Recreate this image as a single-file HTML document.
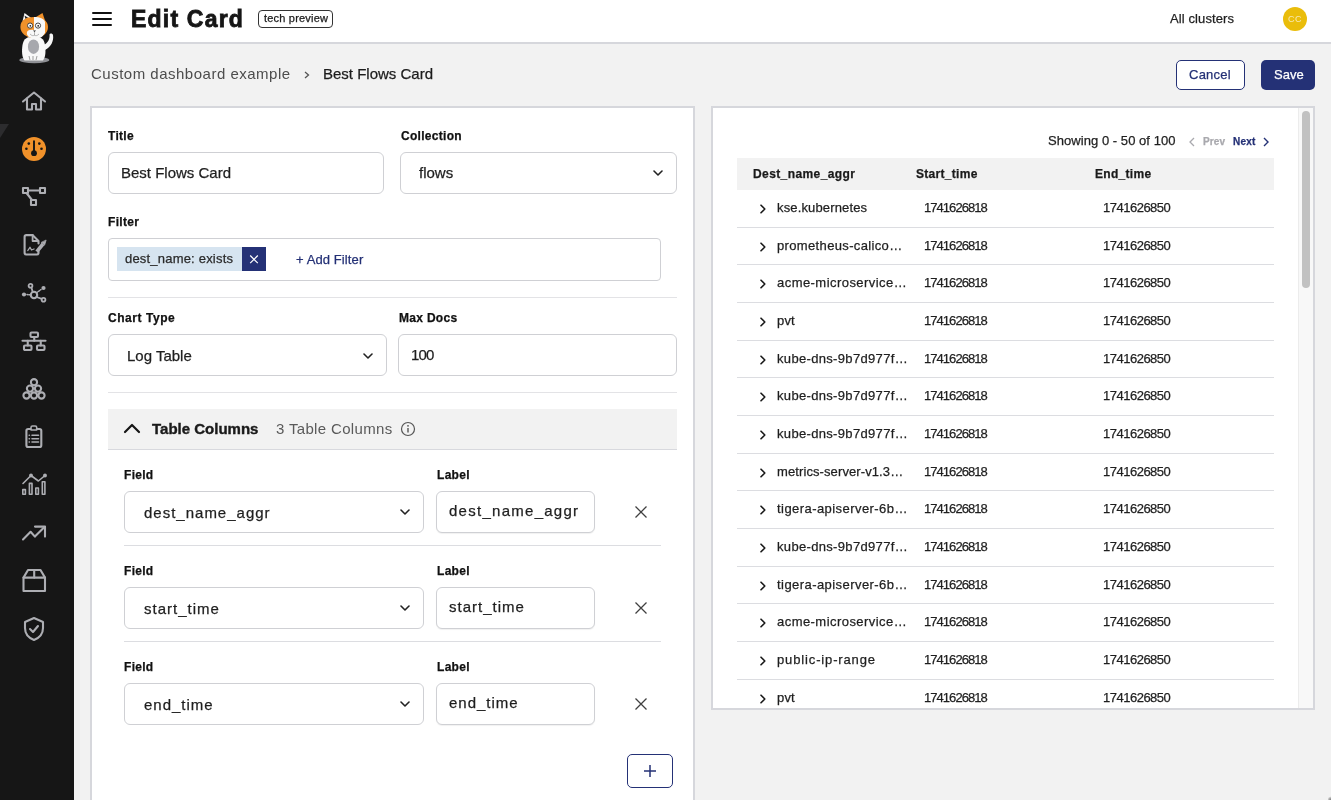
<!DOCTYPE html>
<html><head><meta charset="utf-8"><title>Edit Card</title>
<style>
html,body{margin:0;padding:0;}
body{width:1331px;height:800px;overflow:hidden;background:#f2f2f2;position:relative;font-family:"Liberation Sans", sans-serif;}
.t{position:absolute;white-space:nowrap;will-change:transform;-webkit-text-stroke:0.25px currentColor;}
.b{position:absolute;}
</style></head><body>
<div class="b" style="left:0px;top:0px;width:74px;height:800px;background:#161616;"></div>
<svg class="b" style="left:0;top:120px" width="12" height="20" viewBox="0 0 12 20"><path d="M0 4 L9 4 L0 18 Z" fill="#2c2c2e"/></svg>
<svg class="b" style="left:0;top:0" width="74" height="72" viewBox="0 0 74 72">
<ellipse cx="34.3" cy="60" rx="15" ry="3.3" fill="#8f9095"/>
<path d="M43.5 45 C48 43 50 39 49.5 34.5 C50 33 52.5 33 53 35 C54 41 51 47 45 50 Z" fill="#f6f6f6"/>
<path d="M22.5 45 C21.5 52 22 57 24.5 60.5 L43 60.5 C45.5 57 46 52 45 45 C44 38 40 36.5 34 36.5 C28 36.5 23.5 38 22.5 45Z" fill="#f8f8f8"/>
<ellipse cx="33.5" cy="46.7" rx="5.6" ry="7.2" fill="#a7a8ad"/>
<path d="M29 56 L30 60 M33 56 L33 60 M37 56 L36 60" stroke="#777" stroke-width="0.7"/>
<path d="M22.6 21 L24.5 13 L31.3 18 Z" fill="#f6f6f6"/>
<path d="M24.5 15.5 L25.5 19 L28.5 18 Z" fill="#222"/>
<path d="M36 17 L42.5 13 L45.5 22 Z" fill="#f0912a"/>
<path d="M20.4 27 C20.4 20 26 17 34 17 C42 17 48 20.5 48 27 C48 33 43 38 34 38 C26 38 20.4 33 20.4 27Z" fill="#f0912a"/>
<path d="M34 17 C40 17 44 18.5 45 22 L45 33 C43 36 40 37 34 37 Z" fill="#f8f8f8"/>
<path d="M26.8 33 C27 29.5 31 29.5 34 30 C38 29 43 30 44 33 C43.5 37 40 38.5 35 38.5 C31 38.5 27 37 26.8 33Z" fill="#f8f8f8"/>
<circle cx="30.1" cy="25.6" r="2.6" fill="#fff" stroke="#333" stroke-width="0.9"/>
<circle cx="38" cy="25.6" r="2.6" fill="#fff" stroke="#333" stroke-width="0.9"/>
<circle cx="30.3" cy="25.8" r="0.9" fill="#222"/><circle cx="38.2" cy="25.8" r="0.9" fill="#222"/>
<path d="M33 30.5 L36 30.5 L34.5 32Z" fill="#222"/>
<path d="M34.5 32 L34.5 35.5 M30 34 C32 36 33.5 36 34.5 35 C35.5 36 37 36 39 34" fill="none" stroke="#888" stroke-width="0.6"/>
</svg>
<svg class="b" style="left:20.0px;top:87.0px" width="28" height="28" viewBox="0 0 28 28" fill="none" stroke="#adaeb3" stroke-width="2.1" stroke-linejoin="round" stroke-linecap="round"><path d="M3 14.5 L14 5.5 L25 14.5"/><path d="M7 11.5 L7 22.5 L12 22.5 L12 17 L16 17 L16 22.5 L21 22.5 L21 11.5"/></svg>
<svg class="b" style="left:22px;top:137px" width="24" height="24" viewBox="0 0 24 24"><circle cx="12" cy="12" r="12" fill="#f0912a"/><path d="M12 3.6 L12 14" stroke="#161616" stroke-width="1.9"/><circle cx="12" cy="16.2" r="2.9" fill="#161616"/><circle cx="6.8" cy="6.6" r="1.3" fill="#161616"/><circle cx="17.3" cy="6.6" r="1.3" fill="#161616"/><circle cx="4.4" cy="11.8" r="1.3" fill="#161616"/><circle cx="19.5" cy="11.8" r="1.3" fill="#161616"/></svg>
<svg class="b" style="left:20.0px;top:183.0px" width="28" height="28" viewBox="0 0 28 28" fill="none" stroke="#adaeb3" stroke-width="2.1" stroke-linejoin="round" stroke-linecap="round"><rect x="3" y="5" width="5" height="5"/><rect x="20" y="5" width="5" height="5"/><rect x="11" y="17" width="5" height="5"/><path d="M8 7.5 L20 7.5"/><path d="M6.5 10 L12 17"/></svg>
<svg class="b" style="left:20.0px;top:231.0px" width="28" height="28" viewBox="0 0 28 28" fill="none" stroke="#adaeb3" stroke-width="2.1" stroke-linejoin="round" stroke-linecap="round"><path d="M12.5 4.1 L6.3 4.1 Q4.6 4.1 4.6 5.8 L4.6 21.8 Q4.6 23.5 6.3 23.5 L16.8 23.5 Q18.5 23.5 18.5 21.8 L18.5 20.5"/><path d="M12.5 4.1 L18.5 10 L18.5 12.5"/><path d="M12.6 4.5 L12.6 10 L18.2 10" stroke-width="1.8"/><path d="M7.8 19.5 L10 16.3 L11.5 19 L14 18" stroke-width="1.3"/><path d="M16.8 20.6 L23 13" stroke-width="3.6" stroke-linecap="butt"/><path d="M21.6 11.6 L24.6 14.1 L26 9.4 Z" fill="#adaeb3" stroke-width="0.8"/></svg>
<svg class="b" style="left:20.0px;top:279.0px" width="28" height="28" viewBox="0 0 28 28" fill="none" stroke="#adaeb3" stroke-width="2.1" stroke-linejoin="round" stroke-linecap="round"><circle cx="14" cy="16" r="3.2"/><circle cx="10.5" cy="6.8" r="1.9" stroke-width="1.8"/><circle cx="23.5" cy="20.8" r="1.9" stroke-width="1.8"/><path d="M11.5 8.8 L12.7 13" stroke-width="1.8"/><path d="M16.5 18 L21.8 19.8" stroke-width="1.8"/><path d="M10.6 15.8 L7 15.6" stroke-width="1.5" stroke-dasharray="1.3 1.2"/><path d="M16.6 13.8 L21 10.5" stroke-width="1.5" stroke-dasharray="1.3 1.2"/><circle cx="4" cy="15.5" r="2.1" fill="#adaeb3" stroke="none"/><circle cx="23.5" cy="9" r="2.1" fill="#adaeb3" stroke="none"/></svg>
<svg class="b" style="left:20.0px;top:327.0px" width="28" height="28" viewBox="0 0 28 28" fill="none" stroke="#adaeb3" stroke-width="2.1" stroke-linejoin="round" stroke-linecap="round"><rect x="10.5" y="5.5" width="7.5" height="4.5" rx="1"/><path d="M14.25 10 L14.25 13.8"/><path d="M2.5 13.8 L25.5 13.8"/><path d="M7.75 13.8 L7.75 18.5"/><path d="M20.75 13.8 L20.75 18.5"/><rect x="4" y="18.5" width="7.5" height="4.5" rx="1"/><rect x="17" y="18.5" width="7.5" height="4.5" rx="1"/></svg>
<svg class="b" style="left:20.0px;top:377.0px" width="28" height="24" viewBox="0 0 28 24" fill="none" stroke="#adaeb3" stroke-width="2.1" stroke-linejoin="round" stroke-linecap="round"><circle cx="14" cy="5.2" r="3.1"/><circle cx="10" cy="11.6" r="3.1"/><circle cx="18" cy="11.6" r="3.1"/><circle cx="6.5" cy="18.5" r="3.1"/><circle cx="14" cy="18.5" r="3.1"/><circle cx="21.5" cy="18.5" r="3.1"/></svg>
<svg class="b" style="left:20.0px;top:423.0px" width="28" height="28" viewBox="0 0 28 28" fill="none" stroke="#adaeb3" stroke-width="2.1" stroke-linejoin="round" stroke-linecap="round"><rect x="6.4" y="6" width="14.9" height="18" rx="1.8"/><path d="M11 7 L11 4.5 Q11 3 12.5 3 L15.2 3 Q16.7 3 16.7 4.5 L16.7 7 Z" stroke-width="1.6" fill="#161616"/><path d="M9.2 12.3 L9.4 12.3 M9.2 15.7 L9.4 15.7 M9.2 19 L9.4 19 M12 12.3 L18.5 12.3 M12 15.7 L18.5 15.7 M12 19 L18.5 19" stroke-width="1.6"/></svg>
<svg class="b" style="left:20.0px;top:471.0px" width="28" height="28" viewBox="0 0 28 28" fill="none" stroke="#adaeb3" stroke-width="2.1" stroke-linejoin="round" stroke-linecap="round"><path d="M3 12.5 L11 4.5 L18.4 10 L25 4.5" stroke-width="1.6"/><circle cx="11" cy="4.5" r="0.9" fill="#adaeb3"/><circle cx="25" cy="4.5" r="0.9" fill="#adaeb3"/><rect x="2.8" y="18.6" width="2.6" height="4.6" stroke-width="1.6"/><rect x="9.4" y="12.4" width="2.6" height="10.8" stroke-width="1.6"/><rect x="15.8" y="17" width="2.6" height="6.2" stroke-width="1.6"/><rect x="22.3" y="10.8" width="2.6" height="12.4" stroke-width="1.6"/></svg>
<svg class="b" style="left:20.0px;top:519.0px" width="28" height="28" viewBox="0 0 28 28" fill="none" stroke="#adaeb3" stroke-width="2.1" stroke-linejoin="round" stroke-linecap="round"><path d="M3 20.4 L10.6 12.8 L14.9 17.6 L24.5 8"/><path d="M15 7.6 L25 7.6 L25 17.6"/></svg>
<svg class="b" style="left:20.0px;top:567.0px" width="28" height="28" viewBox="0 0 28 28" fill="none" stroke="#adaeb3" stroke-width="2.1" stroke-linejoin="round" stroke-linecap="round"><path d="M8 3 L20.5 3 L25 10.6 L25 24 L3.5 24 L3.5 10.6 Z"/><path d="M3.5 10.6 L25 10.6"/><path d="M14.2 3 L14.2 10.6"/></svg>
<svg class="b" style="left:20.0px;top:615.0px" width="28" height="28" viewBox="0 0 28 28" fill="none" stroke="#adaeb3" stroke-width="2.1" stroke-linejoin="round" stroke-linecap="round"><path d="M14 3 L23 7 L23 13 C23 19 19 23 14 25 C9 23 5 19 5 13 L5 7 Z"/><path d="M10 14 L13 17 L18 11"/></svg>
<div class="b" style="left:74px;top:0px;width:1257px;height:42px;background:#fff;"></div>
<div class="b" style="left:74px;top:42px;width:1257px;height:2px;background:#d6d7dc;"></div>
<div class="b" style="left:92px;top:12px;width:20px;height:2px;background:#111;border-radius:1px;"></div>
<div class="b" style="left:92px;top:18px;width:20px;height:2px;background:#111;border-radius:1px;"></div>
<div class="b" style="left:92px;top:24px;width:20px;height:2px;background:#111;border-radius:1px;"></div>
<div class="t" style="left:130.6px;top:8.399999999999999px;font-size:23px;line-height:23px;color:#161616;font-weight:700;letter-spacing:1.2px;-webkit-text-stroke:0.8px #161616;">Edit Card</div>
<div class="b" style="left:258px;top:10px;width:75px;height:18px;border:1px solid #333;border-radius:4px;box-sizing:border-box;"></div>
<div class="t" style="left:263.5px;top:13px;font-size:11px;line-height:11px;color:#1a1a1a;letter-spacing:0.2px;">tech preview</div>
<div class="t" style="left:1170.3px;top:12px;font-size:13px;line-height:13px;color:#1f1f1f;letter-spacing:0.1px;">All clusters</div>
<div class="b" style="left:1283px;top:7px;width:24px;height:24px;background:#eabd0b;border-radius:50%;"></div>
<div class="t" style="left:1288.4px;top:14.8px;font-size:9px;line-height:9px;color:#f7e9b5;letter-spacing:0.4px;-webkit-text-stroke:0;">CC</div>
<div class="t" style="left:90.6px;top:66px;font-size:15px;line-height:15px;color:#4d4d4d;letter-spacing:0.5px;-webkit-text-stroke:0;">Custom dashboard example</div>
<svg class="b" style="left:304px;top:71px" width="6" height="8" viewBox="0 0 6 8"><path d="M1 1 L4.5 4 L1 7" fill="none" stroke="#555" stroke-width="1.3"/></svg>
<div class="t" style="left:322.6px;top:66px;font-size:15px;line-height:15px;color:#1c1c1c;">Best Flows Card</div>
<div class="b" style="left:1176px;top:60px;width:69px;height:30px;border:1px solid #243176;border-radius:5px;box-sizing:border-box;background:#fff;"></div>
<div class="t" style="left:1189.3px;top:68px;font-size:13px;line-height:13px;color:#243176;letter-spacing:0.25px;">Cancel</div>
<div class="b" style="left:1261px;top:60px;width:54px;height:30px;background:#243176;border-radius:5px;"></div>
<div class="t" style="left:1273.8px;top:68px;font-size:13px;line-height:13px;color:#fff;">Save</div>
<div class="b" style="left:90px;top:106px;width:605px;height:720px;background:#fff;border:2px solid #d6d7dc;box-sizing:border-box;"></div>
<div class="t" style="left:108.4px;top:130px;font-size:12px;line-height:12px;color:#111;font-weight:700;letter-spacing:0.3px;">Title</div>
<div class="b" style="left:108px;top:152px;width:276px;height:42px;border:1px solid #cfd0d4;border-radius:6px;box-sizing:border-box;background:#fff;"></div>
<div class="t" style="left:121.4px;top:165px;font-size:15px;line-height:15px;color:#1f1f1f;">Best Flows Card</div>
<div class="t" style="left:400.8px;top:130px;font-size:12px;line-height:12px;color:#111;font-weight:700;letter-spacing:0.3px;">Collection</div>
<div class="b" style="left:400px;top:152px;width:277px;height:42px;border:1px solid #cfd0d4;border-radius:6px;box-sizing:border-box;background:#fff;"></div>
<div class="t" style="left:419.3px;top:165px;font-size:15px;line-height:15px;color:#1f1f1f;">flows</div>
<svg class="b" style="left:653px;top:170px" width="10" height="6" viewBox="0 0 10 6"><path d="M1 1 L5.0 5 L9 1" fill="none" stroke="#222" stroke-width="1.6" stroke-linecap="round" stroke-linejoin="round"/></svg>
<div class="t" style="left:108.4px;top:216px;font-size:12px;line-height:12px;color:#111;font-weight:700;letter-spacing:0.3px;">Filter</div>
<div class="b" style="left:108px;top:238px;width:553px;height:43px;border:1px solid #cfd0d4;border-radius:4px;box-sizing:border-box;background:#fff;"></div>
<div class="b" style="left:117px;top:247px;width:125px;height:24px;background:#d6e4f0;"></div>
<div class="b" style="left:242px;top:247px;width:24px;height:24px;background:#243176;"></div>
<svg class="b" style="left:249px;top:254px" width="10" height="10" viewBox="0 0 10 10"><path d="M1.2 1.5 L8.8 9.1 M8.8 1.5 L1.2 9.1" stroke="#fff" stroke-width="1.2"/></svg>
<div class="t" style="left:125.2px;top:252px;font-size:13px;line-height:13px;color:#2a2a2a;letter-spacing:0.2px;">dest_name: exists</div>
<div class="t" style="left:295.6px;top:253px;font-size:13px;line-height:13px;color:#243176;letter-spacing:0.1px;">+ Add Filter</div>
<div class="b" style="left:108px;top:297px;width:569px;height:1px;background:#e3e3e6;"></div>
<div class="t" style="left:108.4px;top:312px;font-size:12px;line-height:12px;color:#111;font-weight:700;letter-spacing:0.55px;">Chart Type</div>
<div class="t" style="left:398.6px;top:312px;font-size:12px;line-height:12px;color:#111;font-weight:700;letter-spacing:0.3px;">Max Docs</div>
<div class="b" style="left:108px;top:334px;width:279px;height:42px;border:1px solid #cfd0d4;border-radius:6px;box-sizing:border-box;background:#fff;"></div>
<div class="t" style="left:127.2px;top:348px;font-size:15px;line-height:15px;color:#1f1f1f;">Log Table</div>
<svg class="b" style="left:363px;top:352.5px" width="10" height="6" viewBox="0 0 10 6"><path d="M1 1 L5.0 5 L9 1" fill="none" stroke="#222" stroke-width="1.6" stroke-linecap="round" stroke-linejoin="round"/></svg>
<div class="b" style="left:398px;top:334px;width:279px;height:42px;border:1px solid #cfd0d4;border-radius:6px;box-sizing:border-box;background:#fff;"></div>
<div class="t" style="left:411.4px;top:347px;font-size:15px;line-height:15px;color:#1f1f1f;letter-spacing:-0.9px;">100</div>
<div class="b" style="left:108px;top:392px;width:569px;height:1px;background:#e3e3e6;"></div>
<div class="b" style="left:108px;top:409px;width:569px;height:40px;background:#f2f2f2;"></div>
<div class="b" style="left:108px;top:449px;width:569px;height:1px;background:#d8d9de;"></div>
<svg class="b" style="left:123px;top:422px" width="18" height="12" viewBox="0 0 18 12"><path d="M2 10 L9 3 L16 10" fill="none" stroke="#161616" stroke-width="2.2" stroke-linecap="round" stroke-linejoin="round"/></svg>
<div class="t" style="left:152.4px;top:421px;font-size:15px;line-height:15px;color:#1a1a1a;font-weight:700;-webkit-text-stroke:0.4px #1a1a1a;">Table Columns</div>
<div class="t" style="left:275.5px;top:421px;font-size:15px;line-height:15px;color:#5a5a5a;letter-spacing:0.34px;-webkit-text-stroke:0;">3 Table Columns</div>
<svg class="b" style="left:400px;top:421px" width="16" height="16" viewBox="0 0 16 16"><circle cx="8" cy="8" r="6.5" fill="none" stroke="#555" stroke-width="1.2"/><path d="M8 7 L8 11.5" stroke="#555" stroke-width="1.4"/><circle cx="8" cy="4.8" r="0.9" fill="#555"/></svg>
<div class="t" style="left:124.3px;top:469px;font-size:12px;line-height:12px;color:#111;font-weight:700;letter-spacing:0.3px;">Field</div>
<div class="t" style="left:436.5px;top:469px;font-size:12px;line-height:12px;color:#111;font-weight:700;letter-spacing:0.3px;">Label</div>
<div class="b" style="left:124px;top:491px;width:300px;height:42px;border:1px solid #cfd0d4;border-radius:6px;box-sizing:border-box;background:#fff;"></div>
<div class="t" style="left:143.8px;top:505px;font-size:15px;line-height:15px;color:#1f1f1f;letter-spacing:1.0px;">dest_name_aggr</div>
<svg class="b" style="left:400px;top:509px" width="10" height="6" viewBox="0 0 10 6"><path d="M1 1 L5.0 5 L9 1" fill="none" stroke="#222" stroke-width="1.6" stroke-linecap="round" stroke-linejoin="round"/></svg>
<div class="b" style="left:436px;top:491px;width:159px;height:42px;border:1px solid #cfd0d4;border-radius:6px;box-sizing:border-box;background:#fff;box-shadow:0 1px 1px rgba(0,0,0,0.06);"></div>
<div class="t" style="left:449.3px;top:503px;font-size:15px;line-height:15px;color:#1f1f1f;letter-spacing:1.27px;">dest_name_aggr</div>
<svg class="b" style="left:635px;top:506px" width="12" height="12" viewBox="0 0 12 12"><path d="M0.5 0.5 L11.5 11.5 M11.5 0.5 L0.5 11.5" stroke="#404040" stroke-width="1.3"/></svg>
<div class="b" style="left:124px;top:545px;width:537px;height:1px;background:#dcdde1;"></div>
<div class="t" style="left:124.3px;top:565px;font-size:12px;line-height:12px;color:#111;font-weight:700;letter-spacing:0.3px;">Field</div>
<div class="t" style="left:436.5px;top:565px;font-size:12px;line-height:12px;color:#111;font-weight:700;letter-spacing:0.3px;">Label</div>
<div class="b" style="left:124px;top:587px;width:300px;height:42px;border:1px solid #cfd0d4;border-radius:6px;box-sizing:border-box;background:#fff;"></div>
<div class="t" style="left:143.8px;top:601px;font-size:15px;line-height:15px;color:#1f1f1f;letter-spacing:1.0px;">start_time</div>
<svg class="b" style="left:400px;top:605px" width="10" height="6" viewBox="0 0 10 6"><path d="M1 1 L5.0 5 L9 1" fill="none" stroke="#222" stroke-width="1.6" stroke-linecap="round" stroke-linejoin="round"/></svg>
<div class="b" style="left:436px;top:587px;width:159px;height:42px;border:1px solid #cfd0d4;border-radius:6px;box-sizing:border-box;background:#fff;box-shadow:0 1px 1px rgba(0,0,0,0.06);"></div>
<div class="t" style="left:449.3px;top:599px;font-size:15px;line-height:15px;color:#1f1f1f;letter-spacing:1.0px;">start_time</div>
<svg class="b" style="left:635px;top:602px" width="12" height="12" viewBox="0 0 12 12"><path d="M0.5 0.5 L11.5 11.5 M11.5 0.5 L0.5 11.5" stroke="#404040" stroke-width="1.3"/></svg>
<div class="b" style="left:124px;top:641px;width:537px;height:1px;background:#dcdde1;"></div>
<div class="t" style="left:124.3px;top:661px;font-size:12px;line-height:12px;color:#111;font-weight:700;letter-spacing:0.3px;">Field</div>
<div class="t" style="left:436.5px;top:661px;font-size:12px;line-height:12px;color:#111;font-weight:700;letter-spacing:0.3px;">Label</div>
<div class="b" style="left:124px;top:683px;width:300px;height:42px;border:1px solid #cfd0d4;border-radius:6px;box-sizing:border-box;background:#fff;"></div>
<div class="t" style="left:143.8px;top:697px;font-size:15px;line-height:15px;color:#1f1f1f;letter-spacing:1.0px;">end_time</div>
<svg class="b" style="left:400px;top:701px" width="10" height="6" viewBox="0 0 10 6"><path d="M1 1 L5.0 5 L9 1" fill="none" stroke="#222" stroke-width="1.6" stroke-linecap="round" stroke-linejoin="round"/></svg>
<div class="b" style="left:436px;top:683px;width:159px;height:42px;border:1px solid #cfd0d4;border-radius:6px;box-sizing:border-box;background:#fff;box-shadow:0 1px 1px rgba(0,0,0,0.06);"></div>
<div class="t" style="left:449.3px;top:695px;font-size:15px;line-height:15px;color:#1f1f1f;letter-spacing:1.0px;">end_time</div>
<svg class="b" style="left:635px;top:698px" width="12" height="12" viewBox="0 0 12 12"><path d="M0.5 0.5 L11.5 11.5 M11.5 0.5 L0.5 11.5" stroke="#404040" stroke-width="1.3"/></svg>
<div class="b" style="left:627px;top:754px;width:46px;height:34px;border:1px solid #243176;border-radius:5px;box-sizing:border-box;"></div>
<svg class="b" style="left:643px;top:764px" width="14" height="14" viewBox="0 0 14 14"><path d="M7 1 L7 13 M1 7 L13 7" stroke="#243176" stroke-width="1.5"/></svg>
<div class="b" style="left:711px;top:106px;width:604px;height:604px;background:#fff;border:2px solid #d6d7dc;box-sizing:border-box;"></div>
<div class="t" style="left:1047.6px;top:134px;font-size:13px;line-height:13px;color:#1f1f1f;letter-spacing:0.05px;">Showing 0 - 50 of 100</div>
<svg class="b" style="left:1188px;top:137px" width="8" height="10" viewBox="0 0 8 10"><path d="M6 1 L2 5 L6 9" fill="none" stroke="#a9a9ae" stroke-width="1.3"/></svg>
<div class="t" style="left:1202.8px;top:137px;font-size:10px;line-height:10px;color:#a9a9ae;font-weight:700;letter-spacing:0.1px;">Prev</div>
<div class="t" style="left:1233px;top:137px;font-size:10px;line-height:10px;color:#243176;font-weight:700;letter-spacing:0.2px;">Next</div>
<svg class="b" style="left:1262px;top:137px" width="8" height="10" viewBox="0 0 8 10"><path d="M2 1 L6 5 L2 9" fill="none" stroke="#243176" stroke-width="1.4"/></svg>
<div class="b" style="left:737px;top:158px;width:537px;height:32px;background:#f2f2f2;"></div>
<div class="t" style="left:753.1px;top:168px;font-size:12px;line-height:12px;color:#1a1a1a;font-weight:700;letter-spacing:0.4px;">Dest_name_aggr</div>
<div class="t" style="left:916.3px;top:168px;font-size:12px;line-height:12px;color:#1a1a1a;font-weight:700;letter-spacing:0.3px;">Start_time</div>
<div class="t" style="left:1095.3px;top:168px;font-size:12px;line-height:12px;color:#1a1a1a;font-weight:700;letter-spacing:0.3px;">End_time</div>
<svg class="b" style="left:759px;top:204px" width="8" height="10" viewBox="0 0 8 10"><path d="M2 1.2 L5.8 5 L2 8.8" fill="none" stroke="#1a1a1a" stroke-width="1.6" stroke-linecap="round" stroke-linejoin="round"/></svg>
<div class="t" style="left:777px;top:201px;font-size:13px;line-height:13px;color:#1f1f1f;letter-spacing:0.15px;">kse.kubernetes</div>
<div class="t" style="left:924px;top:201px;font-size:13px;line-height:13px;color:#1f1f1f;letter-spacing:-0.95px;">1741626818</div>
<div class="t" style="left:1103px;top:201px;font-size:13px;line-height:13px;color:#1f1f1f;letter-spacing:-0.5px;">1741626850</div>
<div class="b" style="left:737px;top:227px;width:537px;height:1px;background:#dcdde1;"></div>
<svg class="b" style="left:759px;top:242px" width="8" height="10" viewBox="0 0 8 10"><path d="M2 1.2 L5.8 5 L2 8.8" fill="none" stroke="#1a1a1a" stroke-width="1.6" stroke-linecap="round" stroke-linejoin="round"/></svg>
<div class="t" style="left:777px;top:239px;font-size:13px;line-height:13px;color:#1f1f1f;letter-spacing:0.35px;">prometheus-calico…</div>
<div class="t" style="left:924px;top:239px;font-size:13px;line-height:13px;color:#1f1f1f;letter-spacing:-0.95px;">1741626818</div>
<div class="t" style="left:1103px;top:239px;font-size:13px;line-height:13px;color:#1f1f1f;letter-spacing:-0.5px;">1741626850</div>
<div class="b" style="left:737px;top:264px;width:537px;height:1px;background:#dcdde1;"></div>
<svg class="b" style="left:759px;top:279px" width="8" height="10" viewBox="0 0 8 10"><path d="M2 1.2 L5.8 5 L2 8.8" fill="none" stroke="#1a1a1a" stroke-width="1.6" stroke-linecap="round" stroke-linejoin="round"/></svg>
<div class="t" style="left:777px;top:276px;font-size:13px;line-height:13px;color:#1f1f1f;letter-spacing:0.45px;">acme-microservice…</div>
<div class="t" style="left:924px;top:276px;font-size:13px;line-height:13px;color:#1f1f1f;letter-spacing:-0.95px;">1741626818</div>
<div class="t" style="left:1103px;top:276px;font-size:13px;line-height:13px;color:#1f1f1f;letter-spacing:-0.5px;">1741626850</div>
<div class="b" style="left:737px;top:302px;width:537px;height:1px;background:#dcdde1;"></div>
<svg class="b" style="left:759px;top:317px" width="8" height="10" viewBox="0 0 8 10"><path d="M2 1.2 L5.8 5 L2 8.8" fill="none" stroke="#1a1a1a" stroke-width="1.6" stroke-linecap="round" stroke-linejoin="round"/></svg>
<div class="t" style="left:777px;top:314px;font-size:13px;line-height:13px;color:#1f1f1f;letter-spacing:0.15px;">pvt</div>
<div class="t" style="left:924px;top:314px;font-size:13px;line-height:13px;color:#1f1f1f;letter-spacing:-0.95px;">1741626818</div>
<div class="t" style="left:1103px;top:314px;font-size:13px;line-height:13px;color:#1f1f1f;letter-spacing:-0.5px;">1741626850</div>
<div class="b" style="left:737px;top:340px;width:537px;height:1px;background:#dcdde1;"></div>
<svg class="b" style="left:759px;top:355px" width="8" height="10" viewBox="0 0 8 10"><path d="M2 1.2 L5.8 5 L2 8.8" fill="none" stroke="#1a1a1a" stroke-width="1.6" stroke-linecap="round" stroke-linejoin="round"/></svg>
<div class="t" style="left:777px;top:352px;font-size:13px;line-height:13px;color:#1f1f1f;letter-spacing:0.33px;">kube-dns-9b7d977f…</div>
<div class="t" style="left:924px;top:352px;font-size:13px;line-height:13px;color:#1f1f1f;letter-spacing:-0.95px;">1741626818</div>
<div class="t" style="left:1103px;top:352px;font-size:13px;line-height:13px;color:#1f1f1f;letter-spacing:-0.5px;">1741626850</div>
<div class="b" style="left:737px;top:377px;width:537px;height:1px;background:#dcdde1;"></div>
<svg class="b" style="left:759px;top:392px" width="8" height="10" viewBox="0 0 8 10"><path d="M2 1.2 L5.8 5 L2 8.8" fill="none" stroke="#1a1a1a" stroke-width="1.6" stroke-linecap="round" stroke-linejoin="round"/></svg>
<div class="t" style="left:777px;top:389px;font-size:13px;line-height:13px;color:#1f1f1f;letter-spacing:0.33px;">kube-dns-9b7d977f…</div>
<div class="t" style="left:924px;top:389px;font-size:13px;line-height:13px;color:#1f1f1f;letter-spacing:-0.95px;">1741626818</div>
<div class="t" style="left:1103px;top:389px;font-size:13px;line-height:13px;color:#1f1f1f;letter-spacing:-0.5px;">1741626850</div>
<div class="b" style="left:737px;top:415px;width:537px;height:1px;background:#dcdde1;"></div>
<svg class="b" style="left:759px;top:430px" width="8" height="10" viewBox="0 0 8 10"><path d="M2 1.2 L5.8 5 L2 8.8" fill="none" stroke="#1a1a1a" stroke-width="1.6" stroke-linecap="round" stroke-linejoin="round"/></svg>
<div class="t" style="left:777px;top:427px;font-size:13px;line-height:13px;color:#1f1f1f;letter-spacing:0.33px;">kube-dns-9b7d977f…</div>
<div class="t" style="left:924px;top:427px;font-size:13px;line-height:13px;color:#1f1f1f;letter-spacing:-0.95px;">1741626818</div>
<div class="t" style="left:1103px;top:427px;font-size:13px;line-height:13px;color:#1f1f1f;letter-spacing:-0.5px;">1741626850</div>
<div class="b" style="left:737px;top:453px;width:537px;height:1px;background:#dcdde1;"></div>
<svg class="b" style="left:759px;top:468px" width="8" height="10" viewBox="0 0 8 10"><path d="M2 1.2 L5.8 5 L2 8.8" fill="none" stroke="#1a1a1a" stroke-width="1.6" stroke-linecap="round" stroke-linejoin="round"/></svg>
<div class="t" style="left:777px;top:465px;font-size:13px;line-height:13px;color:#1f1f1f;letter-spacing:0.1px;">metrics-server-v1.3…</div>
<div class="t" style="left:924px;top:465px;font-size:13px;line-height:13px;color:#1f1f1f;letter-spacing:-0.95px;">1741626818</div>
<div class="t" style="left:1103px;top:465px;font-size:13px;line-height:13px;color:#1f1f1f;letter-spacing:-0.5px;">1741626850</div>
<div class="b" style="left:737px;top:490px;width:537px;height:1px;background:#dcdde1;"></div>
<svg class="b" style="left:759px;top:505px" width="8" height="10" viewBox="0 0 8 10"><path d="M2 1.2 L5.8 5 L2 8.8" fill="none" stroke="#1a1a1a" stroke-width="1.6" stroke-linecap="round" stroke-linejoin="round"/></svg>
<div class="t" style="left:777px;top:502px;font-size:13px;line-height:13px;color:#1f1f1f;letter-spacing:0.44px;">tigera-apiserver-6b…</div>
<div class="t" style="left:924px;top:502px;font-size:13px;line-height:13px;color:#1f1f1f;letter-spacing:-0.95px;">1741626818</div>
<div class="t" style="left:1103px;top:502px;font-size:13px;line-height:13px;color:#1f1f1f;letter-spacing:-0.5px;">1741626850</div>
<div class="b" style="left:737px;top:528px;width:537px;height:1px;background:#dcdde1;"></div>
<svg class="b" style="left:759px;top:543px" width="8" height="10" viewBox="0 0 8 10"><path d="M2 1.2 L5.8 5 L2 8.8" fill="none" stroke="#1a1a1a" stroke-width="1.6" stroke-linecap="round" stroke-linejoin="round"/></svg>
<div class="t" style="left:777px;top:540px;font-size:13px;line-height:13px;color:#1f1f1f;letter-spacing:0.33px;">kube-dns-9b7d977f…</div>
<div class="t" style="left:924px;top:540px;font-size:13px;line-height:13px;color:#1f1f1f;letter-spacing:-0.95px;">1741626818</div>
<div class="t" style="left:1103px;top:540px;font-size:13px;line-height:13px;color:#1f1f1f;letter-spacing:-0.5px;">1741626850</div>
<div class="b" style="left:737px;top:566px;width:537px;height:1px;background:#dcdde1;"></div>
<svg class="b" style="left:759px;top:581px" width="8" height="10" viewBox="0 0 8 10"><path d="M2 1.2 L5.8 5 L2 8.8" fill="none" stroke="#1a1a1a" stroke-width="1.6" stroke-linecap="round" stroke-linejoin="round"/></svg>
<div class="t" style="left:777px;top:578px;font-size:13px;line-height:13px;color:#1f1f1f;letter-spacing:0.44px;">tigera-apiserver-6b…</div>
<div class="t" style="left:924px;top:578px;font-size:13px;line-height:13px;color:#1f1f1f;letter-spacing:-0.95px;">1741626818</div>
<div class="t" style="left:1103px;top:578px;font-size:13px;line-height:13px;color:#1f1f1f;letter-spacing:-0.5px;">1741626850</div>
<div class="b" style="left:737px;top:603px;width:537px;height:1px;background:#dcdde1;"></div>
<svg class="b" style="left:759px;top:618px" width="8" height="10" viewBox="0 0 8 10"><path d="M2 1.2 L5.8 5 L2 8.8" fill="none" stroke="#1a1a1a" stroke-width="1.6" stroke-linecap="round" stroke-linejoin="round"/></svg>
<div class="t" style="left:777px;top:615px;font-size:13px;line-height:13px;color:#1f1f1f;letter-spacing:0.45px;">acme-microservice…</div>
<div class="t" style="left:924px;top:615px;font-size:13px;line-height:13px;color:#1f1f1f;letter-spacing:-0.95px;">1741626818</div>
<div class="t" style="left:1103px;top:615px;font-size:13px;line-height:13px;color:#1f1f1f;letter-spacing:-0.5px;">1741626850</div>
<div class="b" style="left:737px;top:641px;width:537px;height:1px;background:#dcdde1;"></div>
<svg class="b" style="left:759px;top:656px" width="8" height="10" viewBox="0 0 8 10"><path d="M2 1.2 L5.8 5 L2 8.8" fill="none" stroke="#1a1a1a" stroke-width="1.6" stroke-linecap="round" stroke-linejoin="round"/></svg>
<div class="t" style="left:777px;top:653px;font-size:13px;line-height:13px;color:#1f1f1f;letter-spacing:0.86px;">public-ip-range</div>
<div class="t" style="left:924px;top:653px;font-size:13px;line-height:13px;color:#1f1f1f;letter-spacing:-0.95px;">1741626818</div>
<div class="t" style="left:1103px;top:653px;font-size:13px;line-height:13px;color:#1f1f1f;letter-spacing:-0.5px;">1741626850</div>
<div class="b" style="left:737px;top:679px;width:537px;height:1px;background:#dcdde1;"></div>
<svg class="b" style="left:759px;top:694px" width="8" height="10" viewBox="0 0 8 10"><path d="M2 1.2 L5.8 5 L2 8.8" fill="none" stroke="#1a1a1a" stroke-width="1.6" stroke-linecap="round" stroke-linejoin="round"/></svg>
<div class="t" style="left:777px;top:691px;font-size:13px;line-height:13px;color:#1f1f1f;letter-spacing:0.15px;">pvt</div>
<div class="t" style="left:924px;top:691px;font-size:13px;line-height:13px;color:#1f1f1f;letter-spacing:-0.95px;">1741626818</div>
<div class="t" style="left:1103px;top:691px;font-size:13px;line-height:13px;color:#1f1f1f;letter-spacing:-0.5px;">1741626850</div>
<div class="b" style="left:1298px;top:108px;width:15px;height:600px;background:#f8f8f8;border-left:1px solid #ececec;box-sizing:border-box;"></div>
<div class="b" style="left:1302px;top:111px;width:8px;height:177px;background:#c1c1c1;border-radius:4px;"></div>
<div class="b" style="left:1328px;top:796px;width:3px;height:4px;background:radial-gradient(circle at 100% 100%, #777 0, #aaa 40%, rgba(242,242,242,0) 75%);"></div>
</body></html>
